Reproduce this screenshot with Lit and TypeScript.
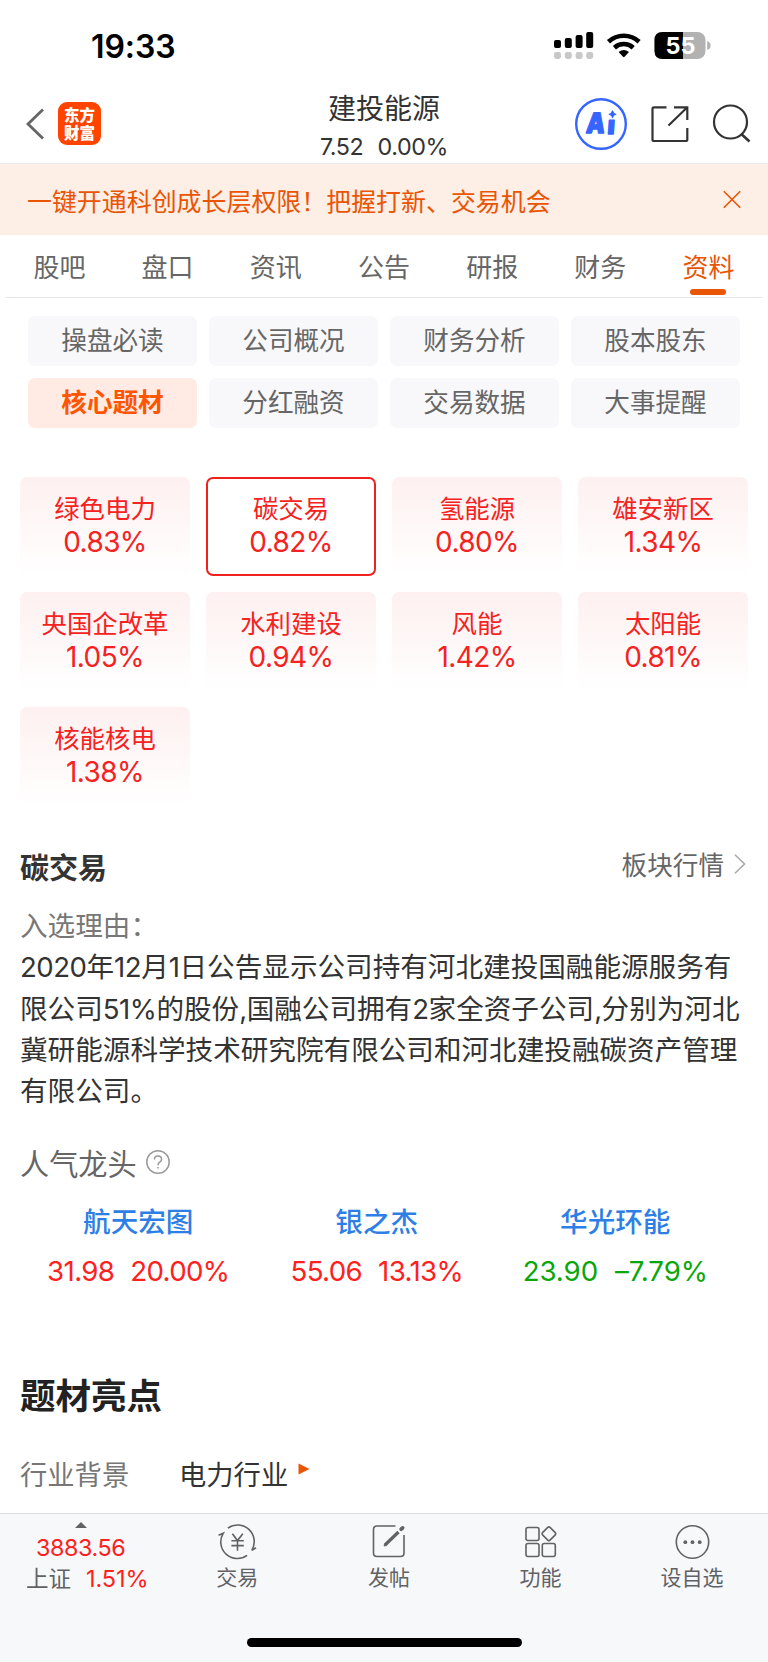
import { LitElement, html, svg, css } from "lit";
import { customElement } from "lit/decorators.js";
import { classMap } from "lit/directives/class-map.js";

const TABS = ["股吧", "盘口", "资讯", "公告", "研报", "财务", "资料"];
const CHIPS = ["操盘必读", "公司概况", "财务分析", "股本股东", "核心题材", "分红融资", "交易数据", "大事提醒"];
const THEMES = [
  ["绿色电力", "0.83%"], ["碳交易", "0.82%"], ["氢能源", "0.80%"], ["雄安新区", "1.34%"],
  ["央国企改革", "1.05%"], ["水利建设", "0.94%"], ["风能", "1.42%"], ["太阳能", "0.81%"],
  ["核能核电", "1.38%"],
];
const REASON = [
  "2020年12月1日公告显示公司持有河北建投国融能源服务有",
  "限公司51%的股份,国融公司拥有2家全资子公司,分别为河北",
  "冀研能源科学技术研究院有限公司和河北建投融碳资产管理",
  "有限公司。",
];
const LEADERS = [
  { name: "航天宏图", price: "31.98", change: "20.00%", down: false },
  { name: "银之杰", price: "55.06", change: "13.13%", down: false },
  { name: "华光环能", price: "23.90", change: "–7.79%", down: true },
];

const icons = {
  trade: svg`<path d="M9.900 6.200A16.600 16.600 0 0 1 33.800 28.300L38 25.800M29.100 33.400A16.600 16.600 0 0 1 5.200 11.300L.6 13.300"/><path d="M14.400 11.800L19.500 18.600L24.800 11.800M13.400 18.800H25.800M13.400 23.600H25.800M19.500 18.600V28.800"/>`,
  post: svg`<path d="M26.500 4H8Q4.500 4 4.500 7.500V31Q4.500 34.500 8 34.500H31.500Q35 34.500 35 31V13"/><path d="M16 23L29.500 10" stroke-width="3.200"/><path d="M32.200 7.200L33.600 5.900" stroke-width="3.800" stroke-linecap="round"/><path d="M15.200 24L18 20.600" stroke-width="2"/>`,
  apps: svg`<rect x="5" y="5.500" width="13" height="13" rx="2"/><rect x="5" y="21.500" width="13" height="13" rx="2"/><rect x="21.300" y="21.500" width="13" height="13" rx="2"/><rect x="22.600" y="6.500" width="10.600" height="10.600" rx="1.600" transform="rotate(45 27.900 11.800)"/>`,
  more: svg`<circle cx="19.500" cy="20" r="16.200"/><g fill="#606266" stroke="none"><circle cx="12.300" cy="20.200" r="1.900"/><circle cx="19.500" cy="20.200" r="1.900"/><circle cx="26.700" cy="20.200" r="1.900"/></g>`,
};
const ACTIONS = [
  ["交易", icons.trade], ["发帖", icons.post], ["功能", icons.apps], ["设自选", icons.more],
] as const;

// Latin runs sit slightly tighter than the Chinese text around them.
const mixed = (line: string) =>
  line.split(/([0-9%,]+)/).map((part) => (/^[0-9%,]+$/.test(part) ? html`<span class="latin">${part}</span>` : part));

@customElement("app-root")
class AppRoot extends LitElement {
  static styles = css`
    :host { display: block; width: 768px; height: 1662px; overflow: hidden; background: #fff;
      font-family: Inter, "Noto Sans CJK SC", sans-serif; color: #333; }
    * { box-sizing: border-box; }
    svg { display: block; overflow: visible; flex: none; }
    .page { display: flex; flex-direction: column; height: 1662px; white-space: nowrap; }
    .status { height: 88px; display: flex; align-items: flex-start; padding: 30px 57px 0 91px; justify-content: space-between; }
    .time { font-size: 32px; line-height: 32px; font-weight: 600; color: #000; letter-spacing: -.1px; margin-top: 1px; }
    .nav { height: 76px; display: grid; grid-template-columns: 1fr auto 1fr; border-bottom: 1.500px solid #e9ebee; }
    .left { display: flex; align-items: flex-start; padding: 14px 0 0 26px; gap: 13px; }
    .logo { width: 43px; height: 43px; border-radius: 9px; background: #ff4400; color: #fff; font-weight: 900;
      font-size: 15.500px; text-align: center; padding-top: 3px; font-family: "Noto Sans CJK SC", sans-serif; }
    .logo span { display: block; height: 18px; line-height: 18px; }
    .title { text-align: center; }
    .name { font-size: 28px; line-height: 40px; padding-top: 1px; }
    .quote { font-size: 23.300px; line-height: 30px; margin-top: 3px; letter-spacing: -.4px; word-spacing: 8px; }
    .right { display: flex; justify-content: flex-end; align-items: flex-start; padding: 9px 17px 0 0; }
    .banner { height: 71px; background: #fdeee6; color: #e95504; display: flex; align-items: center; justify-content: space-between;
      padding: 0 27px 0 27px; font-size: 24.950px; }
    .tabs { height: 63px; margin: 0 6px; border-bottom: 1.500px solid #e6e7f2; display: grid; grid-template-columns: repeat(7, 108.200px);
      justify-content: center; font-size: 26px; color: #666; text-align: center; line-height: 66px; }
    .tab { position: relative; height: 62px; }
    .tab.on { color: #e95504; }
    .tab.on::after { content: ""; position: absolute; left: 36px; bottom: 2px; width: 36px; height: 6px; border-radius: 3px; background: #e95504; }
    .chips { display: grid; grid-template-columns: repeat(4, 169px); gap: 12px; margin: 18px 0 0 28px; }
    .chip { height: 50px; border-radius: 7px; background: #f8f8fa; color: #666; font-size: 25.600px; line-height: 50px; text-align: center; }
    .chip.on { background: #ffebe3; color: #ff5500; font-weight: 700; }
    .themes { display: grid; grid-template-columns: repeat(4, 170px); gap: 16px; margin: 49px 0 0 20px; }
    .theme { height: 99px; border-radius: 7px; background: linear-gradient(#fef0f0, #fff); color: #f52222; text-align: center; padding-top: 15px; }
    .theme.on { background: #fff; border: 2px solid #f02020; padding-top: 13px; }
    .tname { font-size: 25.400px; line-height: 34px; }
    .tpct { font-size: 28px; line-height: 34px; letter-spacing: -.6px; margin-top: -1px; }
    .head { display: flex; justify-content: space-between; align-items: center; margin: 44px 22px 0 20px; height: 38.500px; }
    .h2 { font-size: 29px; font-weight: 700; margin-top: -6px; }
    .link { display: flex; align-items: center; gap: 10px; font-size: 25.600px; color: #666; line-height: 36px; margin-top: -6px; }
    .reason { margin: 17.500px 20px 0; font-size: 27.600px; line-height: 41.300px; }
    .label { color: #777; }
    .line { display: block; }
    .latin { letter-spacing: -.5px; }
    .pop { display: flex; align-items: center; gap: 9px; margin: 30px 0 0 20px; height: 42px; font-size: 29.200px; color: #666; padding-bottom: 2px; }
    .leaders { display: grid; grid-template-columns: repeat(3, 238.500px); margin: 18px 0 0 19px; text-align: center; }
    .lname { font-size: 27.600px; line-height: 40px; color: #2e7fe5; font-weight: 500; }
    .lval { font-size: 27.700px; line-height: 34px; margin-top: 12px; display: flex; justify-content: center; gap: 16px; color: #ff2020; letter-spacing: -.65px; }
    .lval.down { color: #0aa60a; gap: 17px; letter-spacing: -.1px; }
    .h1 { font-size: 35.500px; line-height: 50px; font-weight: 700; color: #222; margin: 83.500px 0 0 20px; }
    .row { display: flex; margin: 34px 0 0 20px; font-size: 27.300px; line-height: 40px; height: 57px; color: #333; }
    .row .label { width: 159px; }
    .tri { margin: 7px 0 0 10px; }
    .bar { flex: 1; background: #f7f8fa; border-top: 1.500px solid #dcdde0; display: flex; flex-direction: column; align-items: center; }
    .items { width: 768px; height: 124.500px; display: flex; color: #606266; }
    .index { width: 161.500px; display: flex; flex-direction: column; align-items: center; padding-top: 8px; }
    .num { font-size: 23.300px; line-height: 30px; color: #ff2020; margin-top: 5.500px; letter-spacing: -.4px; }
    .sub { display: flex; gap: 15px; font-size: 22.500px; line-height: 32px; padding-left: 13px; }
    .up { color: #ff2020; font-size: 23.500px; letter-spacing: -.1px; }
    .act { width: 151.600px; display: flex; flex-direction: column; align-items: center; padding-top: 8px; font-size: 21px; line-height: 30px; gap: 1px; }
    .home { width: 275px; height: 9px; border-radius: 5px; background: #000; }
  `;

  render() {
    return html`<div class="page" lang="zh-CN">
      <div class="status">
        <div class="time">19:33</div>
        <svg width="157" height="30" viewBox="0 0 157 30">
          <g fill="#000"><rect y="10" width="7" height="8" rx="2"/><rect x="10.800" y="8" width="7" height="10" rx="2"/><rect x="21.600" y="5" width="7" height="13" rx="2"/><rect x="32.200" y="2" width="7" height="16" rx="2"/></g>
          <g fill="#c8c8c8"><rect y="22" width="7" height="7" rx="2.400"/><rect x="10.800" y="22" width="7" height="7" rx="2.400"/><rect x="21.600" y="22" width="7" height="7" rx="2.400"/><rect x="32.200" y="22" width="7" height="7" rx="2.400"/></g>
          <g fill="none" stroke="#000" stroke-width="4.600"><path d="M54.500 11.800A22.500 22.500 0 0 1 85.100 11.800"/><path d="M60.400 17.700A14 14 0 0 1 79.200 17.700"/></g>
          <path d="M64.600 22Q69.800 17.800 75 22L70.600 26.800Q69.800 27.500 69 26.800Z" fill="#000"/>
          <rect x="100.500" y="2" width="51" height="27" rx="8" fill="#b2b2b2"/>
          <path d="M108.500 2H129V29H108.500Q100.500 29 100.500 21V10Q100.500 2 108.500 2Z" fill="#000"/>
          <path d="M153.200 11Q156.600 12 156.600 15.500T153.200 20Z" fill="#b2b2b2"/>
          <text x="126.500" y="24" text-anchor="middle" font-size="23.500" font-weight="700" fill="#fff">55</text>
        </svg>
      </div>
      <div class="nav">
        <div class="left">
          <svg width="19" height="43" viewBox="0 0 19 43" fill="none" stroke="#666" stroke-width="2.800"><path d="M17 7.500L2 22L17 36.500"/></svg>
          <div class="logo"><span>东方</span><span>财富</span></div>
        </div>
        <div class="title"><div class="name">建投能源</div><div class="quote">7.52 0.00%</div></div>
        <div class="right">
          <svg width="175" height="54" viewBox="0 0 175 54" fill="none" stroke="#333" stroke-width="2.200">
            <circle cx="25" cy="27" r="24.800" stroke="#3565ff" stroke-width="2.400"/>
            <g fill="#3565ff" stroke="#3565ff" stroke-width="1.400" stroke-linejoin="round" font-size="28" font-weight="900">
              <text transform="translate(9.500 36) skewX(-6) scale(.84 1)">A</text>
              <text transform="translate(31 36.800) skewX(-4) scale(.9 .9)">ı</text>
            </g>
            <path fill="#3565ff" stroke="none" d="M36.500 13Q37.600 16.100 40.700 17.200Q37.600 18.300 36.500 21.400Q35.400 18.300 32.300 17.200Q35.400 16.100 36.500 13Z"/>
            <path d="M90.500 10.300H78Q76.500 10.300 76.500 11.800V42.500Q76.500 44 78 44H109.800Q111.300 44 111.300 42.500V31M98 10.300H111.300V23M110.800 10.800L92.500 28.500"/>
            <circle cx="154.500" cy="25" r="16.500"/><path d="M165.300 37L173.500 44.500" stroke-width="2.600"/>
          </svg>
        </div>
      </div>
      <div class="banner"><span>一键开通科创成长层权限！把握打新、交易机会</span>
        <svg width="18" height="18" viewBox="0 0 18 18" stroke="#e95504" stroke-width="1.600"><path d="M.8 .8L17.200 17.200M17.200 .8L.8 17.200" transform="translate(0 -.5)"/></svg>
      </div>
      <div class="tabs">${TABS.map((t) => html`<div class=${classMap({ tab: true, on: t === "资料" })}>${t}</div>`)}</div>
      <div class="chips">${CHIPS.map((t) => html`<div class=${classMap({ chip: true, on: t === "核心题材" })}>${t}</div>`)}</div>
      <div class="themes">${THEMES.map(([n, p]) => html`<div class=${classMap({ theme: true, on: n === "碳交易" })}><div class="tname">${n}</div><div class="tpct">${p}</div></div>`)}</div>
      <div class="head"><div class="h2">碳交易</div><div class="link">板块行情
        <svg width="12" height="20" viewBox="0 0 12 20" fill="none" stroke="#aaa" stroke-width="1.600"><path d="M1 .8L10.500 10L1 19.200" transform="translate(0 -2)"/></svg></div></div>
      <div class="reason"><span class="line label">入选理由：</span>${REASON.map((l) => html`<span class="line">${mixed(l)}</span>`)}</div>
      <div class="pop">人气龙头
        <svg width="24" height="24" viewBox="0 0 24 24" fill="none" stroke="#999" stroke-width="1.500"><circle cx="12" cy="12" r="11.200"/><path d="M8.400 9.500Q8.400 6 12 6T15.600 9.300Q15.600 11 13.700 12.200Q12 13.300 12 15.300M12 17V18.600"/></svg></div>
      <div class="leaders">${LEADERS.map((s) => html`<div><div class="lname">${s.name}</div><div class=${classMap({ lval: true, down: s.down })}><span>${s.price}</span><span>${s.change}</span></div></div>`)}</div>
      <div class="h1">题材亮点</div>
      <div class="row"><span class="label">行业背景</span><span>电力行业</span>
        <svg class="tri" width="12" height="12" viewBox="0 0 12 12"><path d="M.5 .5L11.500 6L.5 11.500Z" fill="#e95504"/></svg></div>
      <div class="bar">
        <div class="items">
          <div class="index">
            <svg width="12" height="6" viewBox="0 0 12 6"><path d="M6 0L12 6H0Z" fill="#606266"/></svg>
            <div class="num">3883.56</div>
            <div class="sub"><span>上证</span><span class="up">1.51%</span></div>
          </div>
          ${ACTIONS.map(([label, art]) => html`<div class="act"><svg width="39" height="40" viewBox="0 0 39 40" fill="none" stroke="#606266" stroke-width="1.600">${art}</svg><span>${label}</span></div>`)}
        </div>
        <div class="home"></div>
      </div>
    </div>`;
  }
}
